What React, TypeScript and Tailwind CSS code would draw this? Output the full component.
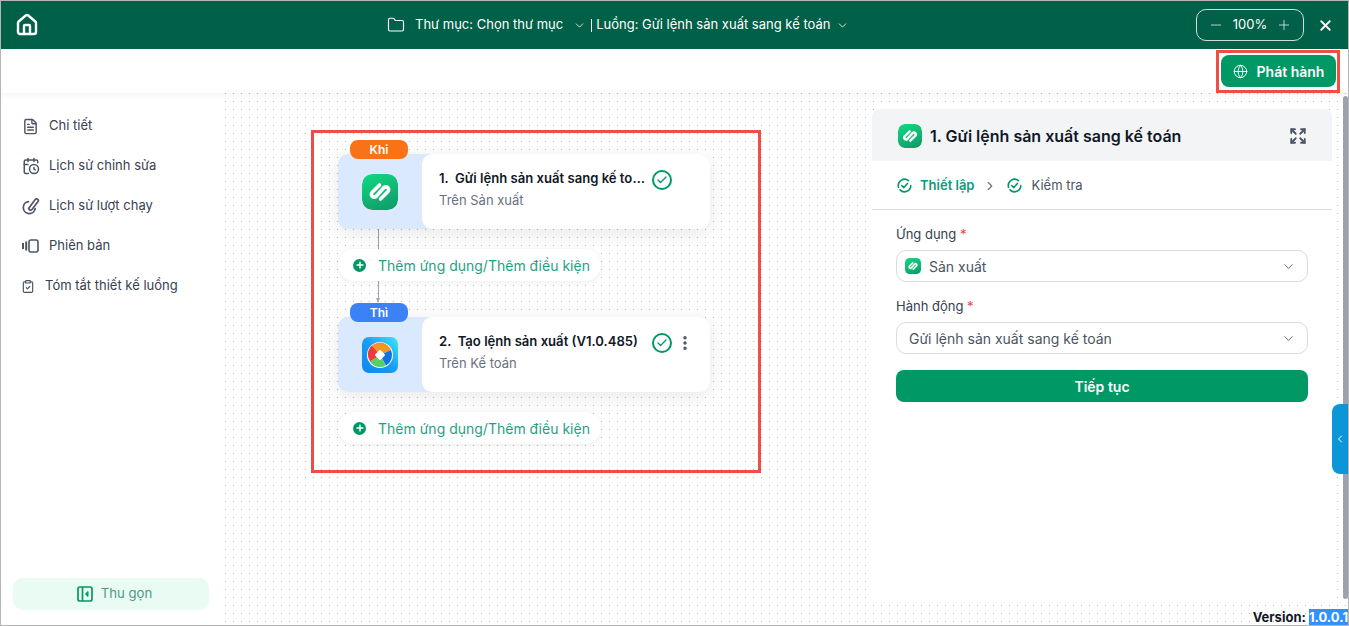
import { useId } from "react";
import {
  CalendarClock,
  Check,
  ChevronDown,
  ChevronLeft,
  ChevronRight,
  ClipboardCheck,
  EllipsisVertical,
  Expand,
  FileText,
  Folder,
  Globe,
  House,
  Minus,
  Plus,
  X,
} from "lucide-react";

function AppLogo({ size, rounded = "rounded-[10px]" }: { size: number; rounded?: string }) {
  const id = useId();
  return (
    <svg width={size} height={size} viewBox="0 0 36 36" className={`shrink-0 ${rounded}`}>
      <defs>
        <linearGradient id={id} x1="0.3" y1="0" x2="0.7" y2="1">
          <stop offset="0" stopColor="#10d57f" />
          <stop offset="1" stopColor="#0f9d6b" />
        </linearGradient>
      </defs>
      <rect width="36" height="36" rx="10" fill={`url(#${id})`} />
      <path
        d="M17.5 11 L10.5 18 A2.6 2.6 0 0 0 14 22.5 L22 13.5 A2.6 2.6 0 0 1 25.5 18 L18.5 25"
        fill="none"
        stroke="#fff"
        strokeWidth="3.7"
        strokeLinecap="round"
        strokeLinejoin="round"
      />
    </svg>
  );
}

function AccountingLogo() {
  const id = useId();
  return (
    <svg width="36" height="36" viewBox="0 0 36 36" className="shrink-0">
      <defs>
        <linearGradient id={id} x1="1" y1="0" x2="0" y2="1">
          <stop offset="0" stopColor="#3fe6fb" />
          <stop offset="0.5" stopColor="#1a9cf5" />
          <stop offset="1" stopColor="#0d86f0" />
        </linearGradient>
      </defs>
      <rect width="36" height="36" rx="7" fill={`url(#${id})`} />
      <circle cx="18" cy="18" r="13" fill="#fff" />
      <path d="M18 18 L10 8.5 A12 12 0 0 1 29 13 Z" fill="#f6961e" />
      <path d="M18 18 L29 13 A12 12 0 0 1 24 28.5 Z" fill="#0c74e4" />
      <path d="M18 18 L24 28.5 A12 12 0 0 1 8 24.5 Z" fill="#54cf6a" />
      <path d="M18 18 L8 24.5 A12 12 0 0 1 10 8.5 Z" fill="#ee3b35" />
      <rect x="14.2" y="14.2" width="7.6" height="7.6" rx="1" fill="#fff" transform="rotate(45 18 18)" />
    </svg>
  );
}

function CheckRing() {
  return (
    <span className="flex h-5 w-5 shrink-0 items-center justify-center rounded-full border-2 border-[#009966]">
      <Check size={12} strokeWidth={2.5} className="text-[#009966]" />
    </span>
  );
}

function StepCheck() {
  return (
    <svg width="15" height="15" viewBox="0 0 16 16" fill="none" stroke="#009966" strokeWidth="1.7" strokeLinecap="round" strokeLinejoin="round">
      <path d="M14.7 8 A6.7 6.7 0 0 1 3.2 12.7" />
      <path d="M1.6 9.8 A6.7 6.7 0 0 1 12.2 2.8" />
      <path d="M5 8 L7.3 10.2 L11.2 5.8" />
    </svg>
  );
}

function RunHistoryIcon() {
  return (
    <svg width="18" height="18" viewBox="0 0 18 18" fill="none" stroke="#4b5563" strokeLinecap="round" strokeWidth="1.7">
      <path d="M6.5 4.6 A6 6 0 1 0 13.2 11.6" />
      <path d="M6.6 11.4 L13.2 2.6 A1.7 1.7 0 0 1 16 4.6 L10.2 12.2 C9 13.6 7.4 13.4 6.6 11.4 Z" strokeLinejoin="round" />
    </svg>
  );
}

function VersionIcon() {
  return (
    <svg width="18" height="16" viewBox="0 0 18 16" fill="none" stroke="#4b5563" strokeWidth="1.6">
      <rect x="7" y="2" width="9" height="12" rx="2" />
      <path d="M4.2 3.5 V12.5" strokeWidth="2" />
      <path d="M1 5 V11" strokeWidth="2" />
    </svg>
  );
}

function CollapseIcon() {
  return (
    <svg width="16" height="16" viewBox="0 0 16 16" fill="none" stroke="#009966" strokeWidth="1.7">
      <rect x="1" y="1" width="14" height="14" rx="2" />
      <path d="M5.5 1 V15" />
      <path d="M11 5.5 L8.4 8 L11 10.5 Z" fill="#009966" strokeWidth="1" strokeLinejoin="round" />
    </svg>
  );
}

function MenuItem({ icon, label, tight }: { icon: React.ReactNode; label: string; tight?: boolean }) {
  return (
    <div className={`flex h-10 items-center pl-[20px] ${tight ? "gap-[10px]" : "gap-[9px]"}`}>
      <span className={`flex shrink-0 items-center justify-center text-[#4b5563] ${tight ? "w-[14px]" : "w-[19px]"}`}>{icon}</span>
      <span className="text-[13px] text-[#374151]">{label}</span>
    </div>
  );
}

function Sidebar() {
  return (
    <aside className="flex w-[220px] shrink-0 flex-col bg-white pt-[13px] pb-[15px] shadow-[0_0_8px_rgba(0,0,0,0.05)]">
      <MenuItem icon={<FileText size={17} />} label="Chi tiết" />
      <MenuItem icon={<CalendarClock size={18} />} label="Lịch sử chỉnh sửa" />
      <MenuItem icon={<RunHistoryIcon />} label="Lịch sử lượt chạy" />
      <MenuItem icon={<VersionIcon />} label="Phiên bản" />
      <MenuItem icon={<ClipboardCheck size={15} />} label="Tóm tắt thiết kế luồng" tight />
      <div className="mx-3 mt-auto flex h-8 items-center justify-center gap-2 rounded-[10px] bg-[#e9fbf3] pl-[7px]">
        <CollapseIcon />
        <span className="text-[13.2px] text-[#4c9a86]">Thu gọn</span>
      </div>
    </aside>
  );
}

function FlowNode({
  top,
  badge,
  badgeColor,
  logo,
  title,
  sub,
  menu,
}: {
  top: number;
  badge: string;
  badgeColor: string;
  logo: React.ReactNode;
  title: string;
  sub: string;
  menu?: boolean;
}) {
  return (
    <div className="absolute left-[117px] flex h-[75px] w-[372px] rounded-[10px] bg-[#dbe9fe] shadow-[0_4px_20px_rgba(0,0,0,0.1)]" style={{ top }}>
      <span className={`absolute -top-[14px] left-[12px] flex h-[19px] w-[58px] items-center justify-center rounded-[8px] text-[12px] font-semibold text-white ${badgeColor}`}>
        {badge}
      </span>
      <div className="flex w-[84px] shrink-0 items-center justify-center pt-[1px]">{logo}</div>
      <div className="flex flex-1 items-start rounded-[10px] bg-white pl-[17px] pt-[15px]">
        <div className="w-[206px]">
          <div className="truncate whitespace-pre text-[13.1px] leading-[18px] font-semibold text-[#111827]">{title}</div>
          <div className="mt-[4px] text-[13px] leading-[18px] text-[#6b7280]">{sub}</div>
        </div>
        <span className="ml-[7px] mt-[1px]"><CheckRing /></span>
        {menu && <EllipsisVertical size={18} strokeWidth={2.6} className="ml-[4px] mt-[2px] text-[#4b5563]" />}
      </div>
    </div>
  );
}

function AddPill({ top }: { top: number }) {
  return (
    <div className="absolute left-[117px] flex h-8 w-[263px] items-center gap-[12px] rounded-full bg-white pl-[15px] shadow-[0_1px_6px_rgba(0,0,0,0.08)]" style={{ top }}>
      <span className="flex h-[13px] w-[13px] items-center justify-center rounded-full bg-[#009966]">
        <Plus size={10} strokeWidth={3.4} className="text-white" />
      </span>
      <span className="text-[14px] text-[#1f9f83]">Thêm ứng dụng/Thêm điều kiện</span>
    </div>
  );
}

function Field({ label, children }: { label: string; children: React.ReactNode }) {
  return (
    <div>
      <div className="text-[13px] leading-[18px] text-[#374151]">
        {label} <span className="text-[#ef4444]">*</span>
      </div>
      <div className="mt-[7px] flex h-8 items-center justify-between rounded-[10px] border border-[#d9dce1] pl-2 pr-[11px]">
        <div className="flex items-center gap-2 text-[14px] text-[#4b5563]">{children}</div>
        <ChevronDown size={15} strokeWidth={1.4} className="text-[#4b5563]" />
      </div>
    </div>
  );
}

function DetailPanel() {
  return (
    <section className="z-10 flex h-[496px] w-[460px] flex-col rounded-[8px] bg-white">
      <div className="flex h-[52px] items-center justify-between rounded-t-[8px] bg-[#f3f4f6] pt-[1px] pl-[26px] pr-[25px]">
        <div className="flex items-center gap-2">
          <AppLogo size={24} rounded="rounded-[7px]" />
          <span className="text-[16px] font-semibold text-[#111827]">1. Gửi lệnh sản xuất sang kế toán</span>
        </div>
        <Expand size={18} strokeWidth={2.4} className="text-[#4b5563]" />
      </div>
      <div className="flex h-[49px] items-center border-b border-[#d9dce1] pl-[25px] pt-[1px]">
        <StepCheck />
        <span className="ml-[8px] text-[13px] font-semibold text-[#12977a]">Thiết lập</span>
        <ChevronRight size={14} className="ml-[9px] text-[#6b7280]" />
        <span className="ml-[10px]"><StepCheck /></span>
        <span className="ml-[9px] text-[13px] text-[#4b5563]">Kiểm tra</span>
      </div>
      <div className="flex flex-col gap-[15px] px-6 pt-[15px]">
        <Field label="Ứng dụng">
          <AppLogo size={16} rounded="rounded-[4px]" />
          <span>Sản xuất</span>
        </Field>
        <Field label="Hành động">
          <span className="pl-[4px]">Gửi lệnh sản xuất sang kế toán</span>
        </Field>
        <button className="mt-[1px] flex h-8 items-center justify-center rounded-[8px] bg-[#009966] text-[14px] font-semibold text-white">Tiếp tục</button>
      </div>
    </section>
  );
}

export default function App() {
  return (
    <div className="relative flex h-[626px] w-[1349px] flex-col overflow-hidden border border-[#b5b5b5] bg-white font-['Inter',sans-serif]">
      <header className="flex h-[48px] shrink-0 items-center bg-[#006048] pl-[14px] pr-[14px] text-white">
        <House size={24} strokeWidth={2.4} />
        <div className="ml-[348px] flex items-center text-[13px]">
          <Folder size={18} strokeWidth={1.5} />
          <span className="ml-[10px]">Thư mục: Chọn thư mục</span>
          <ChevronDown size={13} strokeWidth={1.5} className="ml-[10px]" />
          <span className="ml-[5px] h-[13px] w-px bg-white" />
          <span className="ml-[4px]">Luồng: Gửi lệnh sản xuất sang kế toán</span>
          <ChevronDown size={13} strokeWidth={1.5} className="ml-[6px]" />
        </div>
        <div className="ml-auto flex h-8 w-[108px] items-center justify-center gap-[9px] rounded-[10px] border border-white/80 text-[13px]">
          <Minus size={16} strokeWidth={1.5} className="text-white/70" />
          <span>100%</span>
          <Plus size={16} strokeWidth={1.5} className="text-white/70" />
        </div>
        <X size={17} strokeWidth={2.6} className="ml-[13px]" />
      </header>

      <div className="relative z-20 flex h-[44px] shrink-0 items-start justify-end bg-white pt-[6px] pr-[12px] shadow-[0_2px_6px_rgba(0,0,0,0.05)]">
        <button className="flex h-8 w-[115px] items-center justify-center gap-[9px] rounded-[8px] bg-[#009966] text-[14px] font-semibold text-white">
          <Globe size={15} strokeWidth={1.5} />
          Phát hành
        </button>
      </div>

      <div className="flex min-h-0 flex-1">
        <Sidebar />
        <main className="relative flex flex-1 justify-end bg-white bg-[radial-gradient(circle_at_4.5px_0.5px,#b4b4b4_0.7px,transparent_0.8px)] bg-[size:8px_8px] pt-[16px] pr-[16px]">
          <span className="absolute left-[157px] top-[136px] h-[20px] w-px bg-[#a3a3a3]" />
          <span className="absolute left-[157px] top-[188px] h-[21px] w-px bg-[#a3a3a3]" />
          <span className="absolute left-[155px] top-[205px] h-0 w-0 border-x-[2.5px] border-t-[4px] border-x-transparent border-t-[#a3a3a3]" />

          <FlowNode
            top={61}
            badge="Khi"
            badgeColor="bg-[#f97316]"
            logo={<AppLogo size={36} />}
            title="1.  Gửi lệnh sản xuất sang kế toán"
            sub="Trên Sản xuất"
          />
          <AddPill top={156} />
          <FlowNode
            top={224}
            badge="Thì"
            badgeColor="bg-[#3b82f6]"
            logo={<AccountingLogo />}
            title="2.  Tạo lệnh sản xuất (V1.0.485)"
            sub="Trên Kế toán"
            menu
          />
          <AddPill top={319} />

          <DetailPanel />

          {/* scrollbar and side tab */}
          <span className="absolute right-0 top-[3px] h-[503px] w-[5px] rounded-full bg-[#9ca3af]" />
          <span className="absolute right-0 top-[311px] flex h-[70px] w-[16px] items-center justify-center rounded-l-[8px] bg-[#0b96d8]">
            <ChevronLeft size={12} className="text-white" />
          </span>
          <span className="absolute right-0 bottom-0 text-[13px] leading-[15px] font-bold text-[#111827]">
            Version: <span className="bg-[#3390ff] text-white">1.0.0.1</span>
          </span>
        </main>
      </div>

      {/* annotation boxes */}
      <span className="absolute left-[1215px] top-[49px] z-30 h-[43px] w-[124px] border-[3px] border-[#ef4d45]" />
      <span className="absolute left-[310px] top-[129px] z-30 h-[343px] w-[450px] border-[3px] border-[#ef4d45]" />
    </div>
  );
}
